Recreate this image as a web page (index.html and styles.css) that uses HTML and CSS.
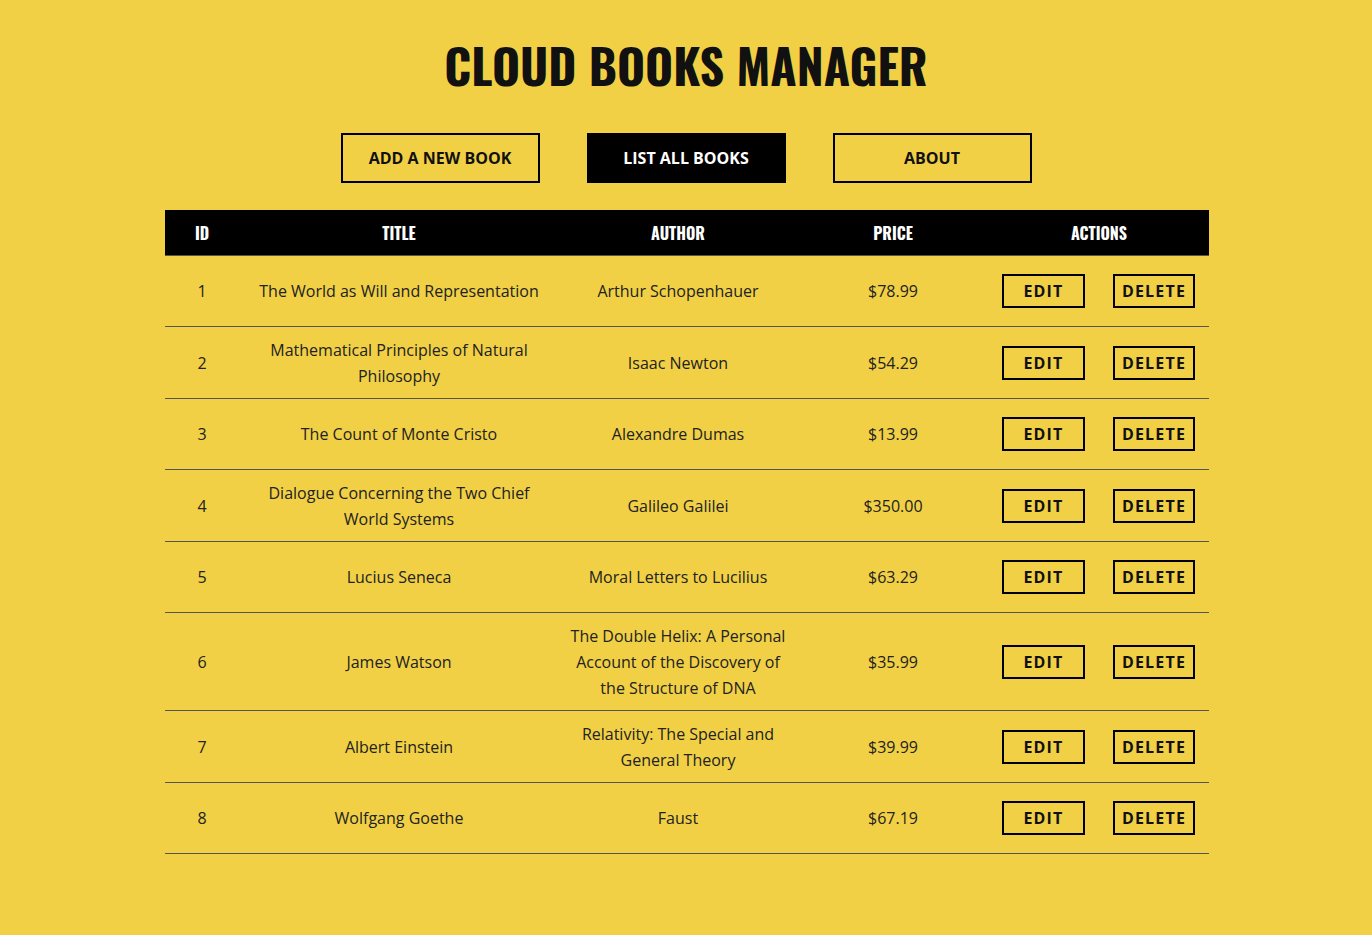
FILE: index.html
```html
<!DOCTYPE html>
<html lang="en">
<head>
<meta charset="utf-8">
<title>Cloud Books Manager</title>
<link rel="stylesheet" href="styles.css">
</head>
<body>
<div class="page">
  <h1 class="title">CLOUD BOOKS MANAGER</h1>
  <nav class="nav">
    <a class="nav-btn" href="#">ADD A NEW BOOK</a>
    <a class="nav-btn nav-btn-active" href="#">LIST ALL BOOKS</a>
    <a class="nav-btn" href="#">ABOUT</a>
  </nav>
  <table class="books">
    <colgroup>
      <col class="c-id"><col class="c-title"><col class="c-author"><col class="c-price"><col class="c-actions">
    </colgroup>
    <thead>
      <tr><th>ID</th><th>TITLE</th><th>AUTHOR</th><th>PRICE</th><th>ACTIONS</th></tr>
    </thead>
    <tbody>
      <tr><td>1</td><td>The World as Will and Representation</td><td>Arthur Schopenhauer</td><td>$78.99</td><td class="actions"><button class="act">EDIT</button><button class="act">DELETE</button></td></tr>
      <tr><td>2</td><td>Mathematical Principles of Natural Philosophy</td><td>Isaac Newton</td><td>$54.29</td><td class="actions"><button class="act">EDIT</button><button class="act">DELETE</button></td></tr>
      <tr><td>3</td><td>The Count of Monte Cristo</td><td>Alexandre Dumas</td><td>$13.99</td><td class="actions"><button class="act">EDIT</button><button class="act">DELETE</button></td></tr>
      <tr><td>4</td><td>Dialogue Concerning the Two Chief World Systems</td><td>Galileo Galilei</td><td>$350.00</td><td class="actions"><button class="act">EDIT</button><button class="act">DELETE</button></td></tr>
      <tr><td>5</td><td>Lucius Seneca</td><td>Moral Letters to Lucilius</td><td>$63.29</td><td class="actions"><button class="act">EDIT</button><button class="act">DELETE</button></td></tr>
      <tr><td>6</td><td>James Watson</td><td>The Double Helix: A Personal Account of the Discovery of the Structure of DNA</td><td>$35.99</td><td class="actions"><button class="act">EDIT</button><button class="act">DELETE</button></td></tr>
      <tr><td>7</td><td>Albert Einstein</td><td>Relativity: The Special and General Theory</td><td>$39.99</td><td class="actions"><button class="act">EDIT</button><button class="act">DELETE</button></td></tr>
      <tr><td>8</td><td>Wolfgang Goethe</td><td>Faust</td><td>$67.19</td><td class="actions"><button class="act">EDIT</button><button class="act">DELETE</button></td></tr>
    </tbody>
  </table>
</div>
</body>
</html>
```

FILE: styles.css
```css
html, body {
  margin: 0;
  padding: 0;
  background: #f1d045;
}
body {
  font-family: "Open Sans", "Noto Sans", sans-serif;
  color: #222;
  font-size: 16px;
}
.page {
  display: flex;
  flex-direction: column;
  align-items: center;
  padding-top: 36px;
  min-height: 935px;
  box-sizing: border-box;
}
.title {
  margin: 0;
  font-family: "Oswald", "Liberation Sans Narrow", "DejaVu Sans Condensed", sans-serif;
  font-weight: 700;
  font-size: 48px;
  line-height: 58px;
  color: #111;
}
.nav {
  display: flex;
  gap: 47px;
  margin-top: 39px;
}
.nav-btn {
  display: flex;
  align-items: center;
  justify-content: center;
  width: 199px;
  height: 50px;
  box-sizing: border-box;
  border: 2px solid #000;
  color: #111;
  text-decoration: none;
  font-weight: 700;
  font-size: 16px;
}
.nav-btn-active {
  background: #000;
  color: #fff;
}
.books {
  margin-top: 27px;
  margin-left: 2px;
  width: 1044px;
  border-collapse: collapse;
  table-layout: fixed;
}
.c-id { width: 74px; }
.c-title { width: 320px; }
.c-author { width: 238px; }
.c-price { width: 192px; }
.c-actions { width: 220px; }
.books th {
  background: #000;
  color: #fff;
  height: 45px;
  padding: 0 8px;
  font-family: "Oswald", "Liberation Sans Narrow", "DejaVu Sans Condensed", sans-serif;
  font-weight: 700;
  font-size: 16px;
  text-align: center;
  border-bottom: 1px solid #555;
}
.books td {
  text-align: center;
  padding: 9.5px 8px;
  line-height: 26px;
  border-bottom: 1px solid #555;
}
.books td.actions {
  padding-left: 6px;
  white-space: nowrap;
}
.act {
  display: inline-block;
  vertical-align: middle;
  height: 34px;
  margin: 8.5px 0;
  padding: 0 0 0 1px;
  box-sizing: border-box;
  background: transparent;
  border: 2px solid #000;
  font-family: "Open Sans", "Noto Sans", sans-serif;
  font-weight: 700;
  font-size: 16px;
  line-height: 28px;
  letter-spacing: 1.2px;
  color: #111;
  cursor: pointer;
}
.act:first-child {
  width: 83px;
  margin-right: 28px;
}
.act:last-child {
  width: 82px;
}
```
